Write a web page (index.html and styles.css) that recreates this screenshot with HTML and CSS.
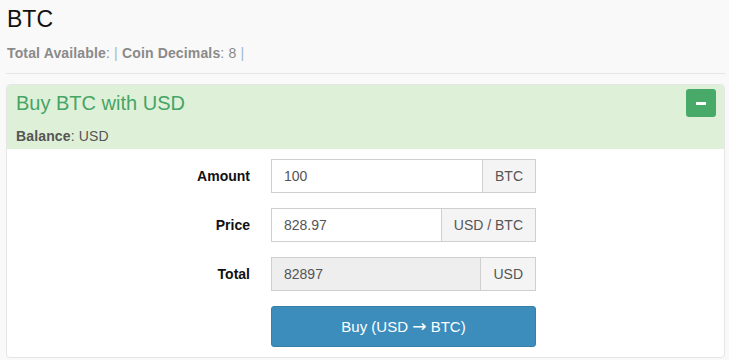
FILE: index.html
```html
<!DOCTYPE html>
<html lang="en">
<head>
  <meta charset="UTF-8" />
  <title>BTC</title>
  <link rel="stylesheet" href="styles.css">
</head>
<body>

  <h1 class="coin-title">BTC</h1>
  <p class="coin-info">
    <b>Total Available</b>: <span class="sep">|</span> <b>Coin Decimals</b>: 8 <span class="sep">|</span>
  </p>
  <hr class="rule">

  <div class="panel">
    <div class="panel-heading">
      <button class="collapse-btn" type="button" aria-label="Collapse"><span class="minus"></span></button>
      <h3 class="panel-title">Buy BTC with USD</h3>
      <div class="balance"><b>Balance</b>: USD</div>
    </div>

    <form class="trade-form" id="buyForm">
      <label class="field-label" for="amount">Amount</label>
      <div class="input-group">
        <input type="text" id="amount" value="100">
        <span class="addon">BTC</span>
      </div>

      <label class="field-label" for="price">Price</label>
      <div class="input-group">
        <input type="text" id="price" value="828.97">
        <span class="addon">USD / BTC</span>
      </div>

      <label class="field-label" for="total">Total</label>
      <div class="input-group">
        <input type="text" id="total" value="82897" disabled>
        <span class="addon">USD</span>
      </div>

      <span></span>
      <button class="buy-btn" type="submit">Buy (USD <span class="arrow">&rarr;</span> BTC)</button>
    </form>
  </div>

</body>
</html>
```

FILE: styles.css
```css
body { margin: 0; padding: 0 4px 0 6px; background: #f9f9f9; font-family: "Liberation Sans", Arial, sans-serif; font-size: 14px; color: #333; }
.coin-title { margin: 7px 0 0; padding-left: 1px; font-size: 23px; font-weight: normal; line-height: 24px; color: #111; }
.coin-info { margin: 12px 0 0; line-height: 20px; color: #8a8a8a; padding-left: 1px; letter-spacing: 0.15px; }
.coin-info b { color: #8a8a8a; }
.coin-info .sep { color: #9fb6d3; }
.rule { margin: 10px 0 0; border: 0; border-top: 1px solid #e6e6e6; }

.panel { margin-top: 10px; background: #fff; border: 1px solid #e6e6e6; border-radius: 4px; overflow: hidden; }
.panel-heading { background: #dff0d8; padding: 7px 8px 3px 9px; }
.panel-title { margin: 0; font-size: 20px; font-weight: normal; line-height: 22px; color: #45a566; }
.balance { margin-top: 12px; line-height: 20px; color: #555; letter-spacing: 0.15px; }
.collapse-btn { float: right; margin-top: -3px; width: 30px; height: 28px; padding: 0; border: 0; border-radius: 3px; background: #48aa69; display: flex; align-items: center; justify-content: center; }
.minus { display: block; width: 10px; height: 3px; background: #fff; }

.trade-form { display: grid; grid-template-columns: 243px 265px; column-gap: 21px; row-gap: 15px; align-items: center; padding: 10px 0 10px; }
.field-label { text-align: right; font-weight: bold; color: #111; }
.input-group { display: flex; height: 34px; }
.input-group input { flex: 1; min-width: 0; box-sizing: border-box; height: 34px; margin: 0; padding: 0 12px; border: 1px solid #cfcfcf; border-radius: 0; font: 14px "Liberation Sans", Arial, sans-serif; color: #555; background: #fff; }
.input-group input:disabled { background: #eee; }
.addon { display: flex; align-items: center; padding: 0 12px; border: 1px solid #cfcfcf; border-left: 0; background: #f4f4f4; color: #555; }
.buy-btn { height: 41px; border: 1px solid #367fa9; border-radius: 3px; background: #3c8dbc; color: #fff; font: 15px "Liberation Sans", Arial, sans-serif; }
.arrow { font-family: "DejaVu Sans", sans-serif; font-size: 17px; line-height: 1; }
```
